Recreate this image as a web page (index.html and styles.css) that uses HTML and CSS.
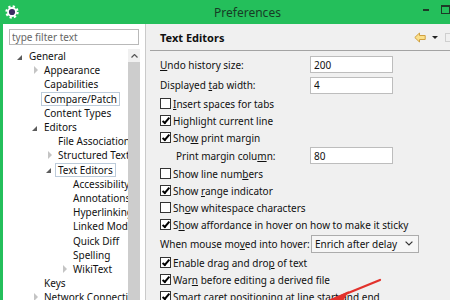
FILE: index.html
```html
<!DOCTYPE html>
<html lang="en">
<head>
  <meta charset="UTF-8">
  <title>Preferences</title>
  <link rel="stylesheet" href="styles.css">
</head>
<body>
  <div class="window">
    <div class="titlebar">
      <svg class="app-icon" viewBox="0 0 14 14">
        <circle cx="7" cy="7" r="5.6" fill="none" stroke="#fff" stroke-width="2.2" stroke-dasharray="2.2 2.2"/>
        <circle cx="7" cy="7" r="4.9" fill="#fff"/>
        <circle cx="7" cy="7" r="3.1" fill="#3b2d63"/>
      </svg>
      <div class="title">Preferences</div>
      <div class="win-btns"><span class="min"></span><span class="max"></span></div>
    </div>

    <div class="main">
      <div class="nav">
        <input class="filter" type="text" placeholder="type filter text">
        <div class="tree-wrap">
          <ul class="tree">
            <li class="l0"><span class="tw open"></span>General</li>
            <li class="l1"><span class="tw closed"></span>Appearance</li>
            <li class="l1"><span class="tw"></span>Capabilities</li>
            <li class="l1"><span class="tw"></span><span class="sel">Compare/Patch</span></li>
            <li class="l1"><span class="tw"></span>Content Types</li>
            <li class="l1"><span class="tw open"></span>Editors</li>
            <li class="l2"><span class="tw"></span>File Associations</li>
            <li class="l2"><span class="tw closed"></span>Structured Text Editors</li>
            <li class="l2"><span class="tw open"></span><span class="sel">Text Editors</span></li>
            <li class="l3"><span class="tw"></span>Accessibility</li>
            <li class="l3"><span class="tw"></span>Annotations</li>
            <li class="l3"><span class="tw"></span>Hyperlinking</li>
            <li class="l3"><span class="tw"></span>Linked Mode</li>
            <li class="l3"><span class="tw"></span>Quick Diff</li>
            <li class="l3"><span class="tw"></span>Spelling</li>
            <li class="l3"><span class="tw closed"></span>WikiText</li>
            <li class="l1"><span class="tw"></span>Keys</li>
            <li class="l1"><span class="tw closed"></span>Network Connections</li>
          </ul>
          <div class="vscroll">
            <div class="vs-up">
              <svg width="7" height="4" viewBox="0 0 7 4"><polyline points="0.5,3.5 3.5,0.5 6.5,3.5" fill="none" stroke="#555" stroke-width="1.2"/></svg>
            </div>
            <div class="vs-thumb"></div>
          </div>
        </div>
      </div>

      <div class="page">
        <div class="page-head">
          <h2>Text Editors</h2>
          <div class="tools">
            <svg width="12" height="11" viewBox="0 0 12 11"><path d="M0.8 5.5 L5.5 1 V3.5 H11.2 V7.5 H5.5 V10 Z" fill="#fbe08a" stroke="#d0a040" stroke-width="1"/></svg>
            <span class="drop"></span>
            <span class="fwd"></span>
          </div>
        </div>

        <div class="form">
          <div class="row field"><span class="lbl"><u>U</u>ndo history size:</span><input class="txt" type="text" value="200"></div>
          <div class="row field2"><span class="lbl">Displayed <u>t</u>ab width:</span><input class="txt" type="text" value="4"></div>
          <div class="row"><span class="cb"></span><span><u>I</u>nsert spaces for tabs</span></div>
          <div class="row"><span class="cb on"></span><span>Highlight current line</span></div>
          <div class="row"><span class="cb on"></span><span>Sho<u>w</u> print margin</span></div>
          <div class="row pm"><span class="lbl">Print margin colu<u>m</u>n:</span><input class="txt" type="text" value="80"></div>
          <div class="row"><span class="cb"></span><span>Show line num<u>b</u>ers</span></div>
          <div class="row"><span class="cb on"></span><span>Show <u>r</u>ange indicator</span></div>
          <div class="row"><span class="cb"></span><span>Sh<u>o</u>w whitespace characters</span></div>
          <div class="row"><span class="cb on"></span><span>S<u>h</u>ow affordance in hover on how to make it sticky</span></div>
          <div class="row hover">
            <span class="lbl">When mouse mo<u>v</u>ed into hover:</span>
            <div class="combo">
              <span>Enrich after delay</span>
              <svg width="8" height="5" viewBox="0 0 8 5"><polyline points="0.6,0.6 4,4 7.4,0.6" fill="none" stroke="#333" stroke-width="1.2"/></svg>
            </div>
          </div>
          <div class="row"><span class="cb on"></span><span>Enable drag and dro<u>p</u> of text</span></div>
          <div class="row"><span class="cb on"></span><span>War<u>n</u> before editing a derived file</span></div>
          <div class="row"><span class="cb on"></span><span><u>S</u>mart caret positioning at line start and end</span></div>
        </div>
      </div>
    </div>
  </div>

  <svg class="annot" width="450" height="300" viewBox="0 0 450 300">
    <line x1="380" y1="280" x2="326" y2="302" stroke="#e2322c" stroke-width="2.2" stroke-linecap="round"/>
    <polygon points="349,291 320,304 343,301" fill="#e2322c"/>
  </svg>
</body>
</html>
```

FILE: styles.css
```css
body {
  margin: 0;
  width: 450px;
  height: 300px;
  overflow: hidden;
  position: relative;
  background: #f0f0f0;
  font-family: "Noto Sans", "DejaVu Sans", sans-serif;
  font-size: 10px;
  color: #111;
}
.window {
  display: flex;
  flex-direction: column;
  height: 300px;
}

/* title bar */
.titlebar {
  height: 24px;
  flex: none;
  display: flex;
  align-items: center;
  background: #24bf5b;
}
.app-icon {
  width: 14px;
  height: 14px;
  margin-left: 5px;
  flex: none;
}
.title {
  flex: 1;
  text-align: center;
  padding-left: 56px;
  font-size: 12px;
  color: #173c25;
}
.win-btns {
  width: 30px;
  height: 24px;
  flex: none;
  display: flex;
  align-items: flex-start;
}
.min {
  width: 8px;
  height: 2px;
  margin: 9px 0 0 3px;
  background: #1d3a27;
}
.max {
  width: 9px;
  height: 6px;
  margin: 5px 0 0 12px;
  border: 1px solid #1d3a27;
  border-top-width: 2px;
}

.main {
  flex: 1;
  min-height: 0;
  display: flex;
  border-left: 3px solid #24bf5b;
}

/* left navigation */
.nav {
  width: 142px;
  flex: none;
  display: flex;
  flex-direction: column;
  background: #fff;
  border-right: 1px solid #cacaca;
  margin-right: 4px;
}
.filter {
  width: 130px;
  height: 16px;
  margin: 5px 0 4px 6px;
  box-sizing: border-box;
  border: 1px solid #b9b9b9;
  padding: 0 2px;
  font: 10px "Noto Sans", sans-serif;
  outline: none;
}
.filter::placeholder { color: #666; }
.tree-wrap {
  flex: 1;
  min-height: 0;
  display: flex;
}
.tree {
  flex: 1;
  min-width: 0;
  margin: 0;
  padding: 0;
  list-style: none;
  overflow: hidden;
}
.tree li {
  height: 14.2px;
  display: flex;
  align-items: center;
  white-space: nowrap;
}
.l0 { padding-left: 13px; }
.l1 { padding-left: 28px; }
.l2 { padding-left: 42px; }
.l3 { padding-left: 57px; }
.tw {
  width: 13px;
  flex: none;
  display: flex;
  align-items: center;
}
.tw.open::before {
  content: "";
  margin: 2px 0 0 1px;
  border-left: 5px solid transparent;
  border-bottom: 5px solid #5c5c5c;
}
.tw.closed::before {
  content: "";
  margin-left: 3px;
  border-top: 4px solid transparent;
  border-bottom: 4px solid transparent;
  border-left: 4px solid #c4c4c4;
}
.sel {
  border: 1px solid #bccbda;
  padding: 0 2px;
  margin-left: -3px;
  line-height: 12px;
}
.vscroll {
  width: 12px;
  flex: none;
  margin-right: 5px;
  display: flex;
  flex-direction: column;
}
.vs-up {
  height: 13px;
  display: flex;
  align-items: center;
  justify-content: center;
  background: #f0f0f0;
}
.vs-thumb {
  flex: 1;
  background: #cdcdcd;
}

/* right page */
.page {
  flex: 1;
  min-width: 0;
  display: flex;
  flex-direction: column;
}
.page-head {
  height: 26px;
  flex: none;
  display: flex;
  align-items: center;
  padding-left: 10px;
  border-bottom: 1px solid #a3a3a3;
}
.page-head h2 {
  flex: 1;
  margin: 0;
  font-size: 11px;
  font-weight: bold;
}
.tools {
  display: flex;
  align-items: center;
  margin-right: -5px;
}
.drop {
  margin-left: 6px;
  border-left: 3px solid transparent;
  border-right: 3px solid transparent;
  border-top: 3px solid #222;
}
.fwd {
  width: 8px;
  height: 7px;
  margin-left: 7px;
  border: 1px solid #cfcfcf;
}

.form { padding: 3px 0 0 10px; }
.row {
  height: 17px;
  display: flex;
  align-items: center;
  white-space: nowrap;
}
.row.field { height: 21px; }
.row.field2 { height: 20px; }
.row.pm { height: 19px; }
.row.hover { height: 21px; }
.lbl {
  width: 150px;
  flex: none;
}
.pm .lbl {
  width: 134px;
  padding-left: 16px;
}
.hover .lbl { width: 151px; }
.txt {
  width: 83px;
  height: 17px;
  box-sizing: border-box;
  border: 1px solid #bdbdbd;
  padding: 0 3px;
  background: #fff;
  font: 10px "Noto Sans", sans-serif;
  color: #111;
  outline: none;
}
.combo {
  width: 108px;
  height: 18px;
  box-sizing: border-box;
  display: flex;
  align-items: center;
  justify-content: space-between;
  padding: 0 5px 0 3px;
  border: 1px solid #acacac;
  background: #f6f6f6;
}
.cb {
  width: 11px;
  height: 11px;
  flex: none;
  box-sizing: border-box;
  margin-right: 2px;
  border: 1px solid #333;
  background: #fff;
  position: relative;
}
.cb.on::after {
  content: "";
  position: absolute;
  left: 3px;
  top: 0;
  width: 2px;
  height: 6px;
  border: solid #000;
  border-width: 0 2px 2px 0;
  transform: rotate(40deg);
}

.annot {
  position: absolute;
  left: 0;
  top: 0;
  pointer-events: none;
}
```
